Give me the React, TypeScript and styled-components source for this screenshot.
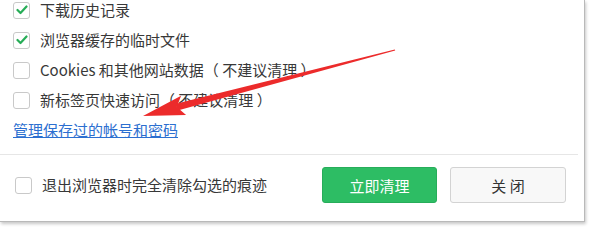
import React, { FunctionComponent } from "react";
import styled, { createGlobalStyle } from "styled-components";

interface CheckProps {
  checked?: boolean;
}

interface ButtonProps {
  primary?: boolean;
}

const options = [
  { label: "下载历史记录", checked: true },
  { label: "浏览器缓存的临时文件", checked: true },
  { label: "Cookies 和其他网站数据（ 不建议清理 ）", checked: false },
  { label: "新标签页快速访问（ 不建议清理 ）", checked: false }
];

const CheckBox: FunctionComponent<CheckProps> = ({ checked }) => (
  <Box checked={checked}>
    {checked && (
      <svg width="12" height="10" viewBox="0 0 12 10">
        <polyline
          points="1.5,5 4.5,8 10.5,1.5"
          fill="none"
          stroke="#27ad57"
          strokeWidth="2.2"
          strokeLinecap="round"
          strokeLinejoin="round"
        />
      </svg>
    )}
  </Box>
);

// red annotation arrow drawn over the dialog
const Arrow = () => (
  <ArrowLayer width="590" height="237" viewBox="0 0 590 237">
    <polygon
      points="395.2,50.4 177.7,110.5 175.9,103.7 394.8,49.6"
      fill="#ec2b2b"
    />
    <polygon
      points="143,116 186.1,115.1 176.8,107.1 181.1,95.7"
      fill="#ec2b2b"
    />
  </ArrowLayer>
);

const App: FunctionComponent = () => {
  return (
    <>
      <GlobalStyle />
      <Page>
        <Dialog>
          <Body>
            {options.map(item => (
              <Row key={item.label}>
                <CheckBox checked={item.checked} />
                <Label>{item.label}</Label>
              </Row>
            ))}
            <Row>
              <Link href="#">管理保存过的帐号和密码</Link>
            </Row>
          </Body>
          <Footer>
            <Row>
              <CheckBox />
              <Label>退出浏览器时完全清除勾选的痕迹</Label>
            </Row>
            <Actions>
              <Button primary>立即清理</Button>
              <Button>关 闭</Button>
            </Actions>
          </Footer>
        </Dialog>
        <Arrow />
      </Page>
    </>
  );
};

const GlobalStyle = createGlobalStyle`
  html, body {
    margin: 0;
    padding: 0;
    background: #ffffff;
  }
  body {
    font-family: "Noto Sans CJK SC", "Noto Sans", "Liberation Sans", sans-serif;
    color: #333333;
  }
`;

const Page = styled.div`
  position: relative;
  width: 590px;
  height: 237px;
  overflow: hidden;
  background: #ffffff;
`;

const Dialog = styled.div`
  width: 584px;
  background: #ffffff;
  border-right: 1px solid #b9b9b9;
  border-bottom: 1px solid #b9b9b9;
  box-shadow: 1px 2px 3px rgba(0, 0, 0, 0.22);
`;

const Body = styled.div`
  display: grid;
  grid-auto-rows: 20px;
  row-gap: 10px;
  padding: 0 0 14px 13px;
  margin-right: 6px;
  border-bottom: 1px solid #e6e6e6;
`;

const Row = styled.div`
  display: flex;
  align-items: center;
  gap: 10px;
  height: 20px;
`;

const Box = styled.span<CheckProps>`
  display: flex;
  align-items: center;
  justify-content: center;
  box-sizing: border-box;
  width: 17px;
  height: 17px;
  border: 1px solid #c9c9c9;
  border-radius: 3px;
  background: #ffffff;
  flex-shrink: 0;
`;

const Label = styled.span`
  font-size: 15px;
  line-height: 20px;
  color: #383838;
  white-space: nowrap;
`;

const Link = styled.a`
  font-size: 15px;
  line-height: 20px;
  color: #2c6fd0;
  text-decoration: underline;
  white-space: nowrap;
`;

const Footer = styled.div`
  display: flex;
  align-items: center;
  justify-content: space-between;
  padding: 12px 18px 18px 15px;
`;

const Actions = styled.div`
  display: flex;
  gap: 13px;
`;

const Button = styled.button<ButtonProps>`
  box-sizing: border-box;
  width: ${props => (props.primary ? "115px" : "116px")};
  height: 36px;
  border-radius: 3px;
  font-family: "Noto Sans CJK SC", "Noto Sans", sans-serif;
  font-size: 15px;
  cursor: pointer;
  ${props =>
    props.primary
      ? `
      background: #2dbd64;
      border: 1px solid #27ad5a;
      color: #ffffff;
    `
      : `
      background: #f8f8f8;
      border: 1px solid #d3d3d3;
      color: #333333;
    `}
`;

const ArrowLayer = styled.svg`
  position: absolute;
  left: 0;
  top: 0;
  pointer-events: none;
`;

export default App;
